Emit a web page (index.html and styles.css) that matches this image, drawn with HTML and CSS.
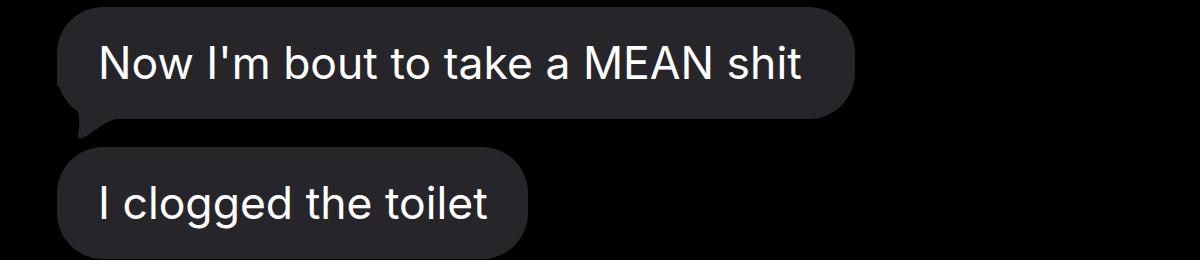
FILE: index.html
```html
<!DOCTYPE html>
<html>
<head>
<meta charset="utf-8">
<link rel="stylesheet" href="styles.css">
</head>
<body>
<div class="thread">
  <div class="bubble tailed">
    <span class="text">Now I'm bout to take a MEAN shit</span>
    <svg class="tail" width="80" height="70" viewBox="0 0 80 70" aria-hidden="true">
      <path d="M0,0 L0,8 C8,14 20,24 22,40 C23,48 21,55 21,59 C21,62 24,62 28,60 C38,54 48,44 60,42 L80,42 L80,0 Z" fill="#26252a"/>
    </svg>
  </div>
  <div class="bubble">
    <span class="text">I clogged the toilet</span>
  </div>
</div>
</body>
</html>
```
FILE: styles.css
```css
html, body {
  margin: 0;
  padding: 0;
  background: #000;
}
.thread {
  display: flex;
  flex-direction: column;
  align-items: flex-start;
  gap: 28px;
  padding: 7px 0 0 57px;
}
.bubble {
  position: relative;
  background: #26252a;
  border-radius: 46px;
  height: 112px;
  line-height: 112px;
  padding: 0 40px 0 41px;
  font-family: Inter, "Liberation Sans", sans-serif;
  font-size: 44.5px;
  color: #fff;
  white-space: nowrap;
}
.tailed {
  padding-right: 53px;
}
.tail {
  position: absolute;
  left: 0;
  top: 70px;
  display: block;
}
.text {
  position: relative;
  z-index: 1;
}
```
